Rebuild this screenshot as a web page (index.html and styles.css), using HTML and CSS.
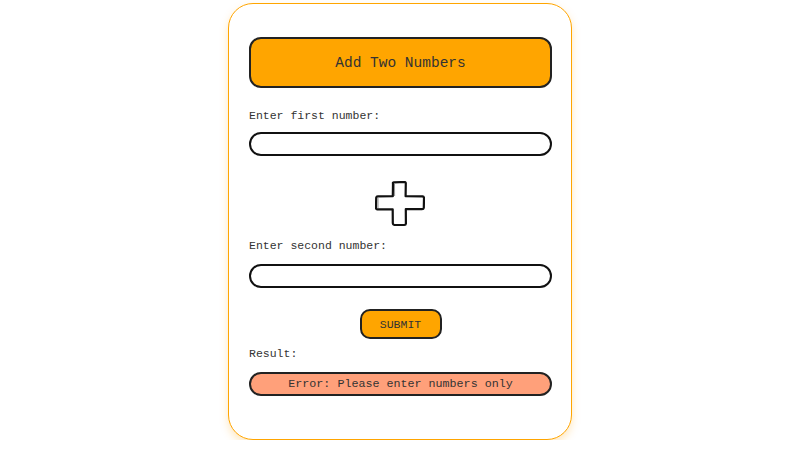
FILE: index.html
```html
<!DOCTYPE html>
<html>
<head>
<meta charset="utf-8">
<link rel="stylesheet" href="styles.css">
</head>
<body>
<div class="card">
  <div class="title">Add Two Numbers</div>
  <label class="label label-first">Enter first number:</label>
  <div class="input input-first"></div>
  <div class="plus">
    <svg width="50" height="46" viewBox="0 0 50 46">
      <path d="M18 2.5 Q17.5 1.5 19 1.3 L29.5 1 Q31 1.2 30.8 2.5 L30.6 15.2 L47.5 15.4 Q49 15.6 49 17 L48.8 26.8 Q48.6 28.2 47 28.2 L30.8 28 L30.9 42.6 Q30.8 44 29.3 44 L19.2 43.8 Q17.8 43.6 17.8 42.2 L17.7 28.3 L2.3 28.4 Q1 28.3 1 27 L1.2 16.6 Q1.4 15.3 2.8 15.3 L17.8 15.2 Z" fill="#fff" stroke="#111" stroke-width="2.2" stroke-linejoin="round"/>
      <path d="M19.5 3 L19.6 15" stroke="#777" stroke-width="0.8" fill="none"/>
      <path d="M3 17 L3 27" stroke="#777" stroke-width="0.8" fill="none"/>
    </svg>
  </div>
  <label class="label label-second">Enter second number:</label>
  <div class="input input-second"></div>
  <div class="submit-row"><div class="submit">SUBMIT</div></div>
  <div class="label label-result">Result:</div>
  <div class="error">Error: Please enter numbers only</div>
</div>
</body>
</html>
```

FILE: styles.css
```css
* { box-sizing: border-box; }
html, body { margin: 0; padding: 0; background: #fff; }
body {
  font-family: "Liberation Mono", "Courier New", monospace;
  color: #333;
}
.card {
  width: 344px;
  height: 437px;
  margin: 3px auto 0;
  padding: 33px 19px 0 20px;
  border: 1px solid #ffa500;
  border-radius: 25px;
  background: #fff;
  box-shadow: 0 4px 8px rgba(255, 165, 0, 0.25);
  display: flex;
  flex-direction: column;
}
.title {
  height: 51px;
  background: #ffa500;
  border: 2px solid #222;
  border-radius: 12px;
  display: flex;
  align-items: center;
  justify-content: center;
  font-size: 14.5px;
  color: #333;
}
.label {
  display: block;
  font-size: 11.5px;
  line-height: 14px;
  height: 14px;
  color: #333;
}
.label-first { margin-top: 21px; }
.input {
  height: 24px;
  border: 2px solid #111;
  border-radius: 12px;
  background: #fff;
}
.input-first { margin-top: 9px; }
.plus {
  margin-top: 25px;
  height: 46px;
  display: flex;
  justify-content: center;
}
.plus svg { display: block; margin-left: -1px; }
.label-second { margin-top: 12px; }
.input-second { margin-top: 11px; }
.submit-row {
  margin-top: 21px;
  display: flex;
  justify-content: center;
}
.submit {
  width: 82px;
  height: 30px;
  background: #ffa500;
  border: 2px solid #222;
  border-radius: 10px;
  display: flex;
  align-items: center;
  justify-content: center;
  font-size: 11.5px;
  color: #333;
}
.label-result { margin-top: 8px; }
.error {
  margin-top: 11px;
  height: 24px;
  background: #ffa07a;
  border: 2px solid #222;
  border-radius: 12px;
  display: flex;
  align-items: center;
  justify-content: center;
  font-size: 11.7px;
  color: #333;
}
```
